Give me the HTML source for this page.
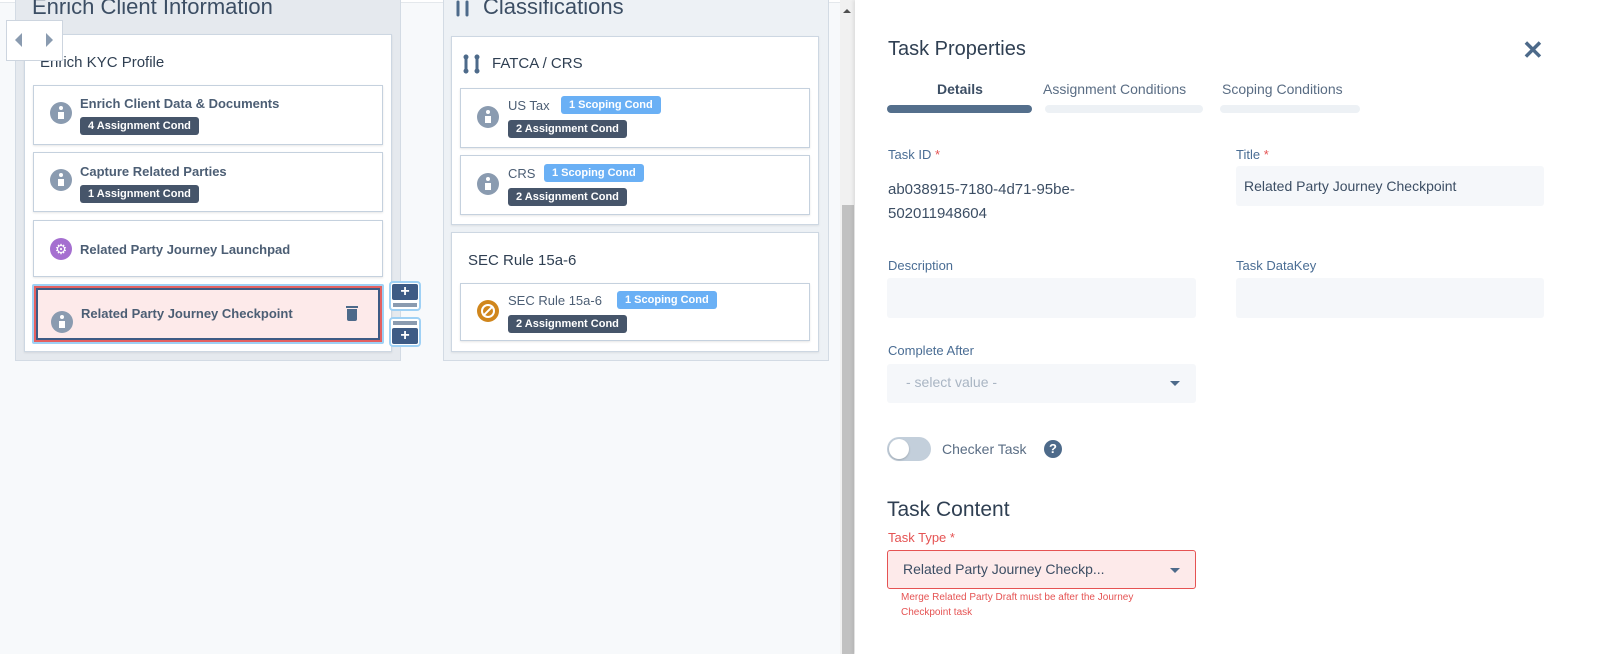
<!DOCTYPE html>
<html><head><meta charset="utf-8"><style>
*{box-sizing:border-box;margin:0;padding:0}
body{width:1612px;height:654px;overflow:hidden;background:#f7f9fb;font-family:"Liberation Sans",sans-serif;position:relative;color:#3c4e64}
.a{position:absolute}
.col{position:absolute;border:1px solid #d3dbe4;border-top:none}
.card{position:absolute;background:#fff;border:1px solid #cdd7e2;box-shadow:0 1px 2px rgba(0,0,0,.08)}
.t{position:absolute;background:#fff;border:1px solid #c5d1de;box-shadow:0 1px 2px rgba(0,0,0,.1)}
.ic{position:absolute;width:22px;height:22px;border-radius:50%;background:#8a9bb0}
.ic i{position:absolute;left:9px;top:4px;width:4px;height:4px;border-radius:50%;background:#fff}
.ic b{position:absolute;left:8px;top:10px;width:6px;height:7px;background:#fff}
.tt{position:absolute;font-size:13px;font-weight:bold;color:#4c5e74}
.bd{position:absolute;height:18px;line-height:18px;border-radius:3px;font-size:11px;font-weight:bold;color:#fff;padding:0 8px;background:#46556a}
.bl{background:#6ab0f5}
.lbl{position:absolute;font-size:13px;color:#4a6d94}
.req{color:#e55353}
.inp{position:absolute;background:#f5f7fa;border-radius:3px}
.tri{position:absolute;width:0;height:0;border-left:5px solid transparent;border-right:5px solid transparent;border-top:5px solid #4d6a8a}
</style></head><body>
<div class="a" style="left:0;top:0;width:840px;height:3px;background:#fff;border-bottom:1px solid #e4e8ec"></div>
<!-- col1 -->
<div class="col" style="left:15px;top:0;width:386px;height:361px;background:#e5e9ee"></div>
<div class="a" style="left:32px;top:-6px;font-size:22px;color:#3c4e64">Enrich Client Information</div>
<div class="card" style="left:24px;top:34px;width:368px;height:318px;background:#fff"></div>
<div class="a" style="left:40px;top:54px;font-size:15px;color:#2f3f52">Enrich KYC Profile</div>
<div class="a" style="left:6px;top:20px;width:57px;height:41px;background:#fff;border:1px solid #cdd5df"></div>
<div class="a" style="left:15px;top:33px;width:0;height:0;border-top:7px solid transparent;border-bottom:7px solid transparent;border-right:7px solid #8a9bb0"></div>
<div class="a" style="left:46px;top:33px;width:0;height:0;border-top:7px solid transparent;border-bottom:7px solid transparent;border-left:7px solid #8a9bb0"></div>

<div class="t" style="left:33px;top:85px;width:350px;height:60px"></div>
<div class="ic" style="left:50px;top:102px"><i></i><b></b></div>
<div class="tt" style="left:80px;top:96px">Enrich Client Data &amp; Documents</div>
<div class="bd" style="left:80px;top:117px">4 Assignment Cond</div>

<div class="t" style="left:33px;top:152px;width:350px;height:60px"></div>
<div class="ic" style="left:50px;top:169px"><i></i><b></b></div>
<div class="tt" style="left:80px;top:164px">Capture Related Parties</div>
<div class="bd" style="left:80px;top:185px">1 Assignment Cond</div>

<div class="t" style="left:33px;top:220px;width:350px;height:57px"></div>
<div class="a" style="left:50px;top:238px;width:22px;height:22px;border-radius:50%;background:#a56fd0;color:#fff;font-size:14px;text-align:center;line-height:22px">⚙</div>
<div class="tt" style="left:80px;top:242px">Related Party Journey Launchpad</div>

<div class="a" style="left:32px;top:284px;width:352px;height:60px;border:2px solid #9fd1f5;border-radius:2px"></div>
<div class="a" style="left:34px;top:286px;width:348px;height:56px;background:#fdeaea;border:2px solid #e46060;outline:2px solid #3d5b85;outline-offset:-4px"></div>
<div class="ic" style="left:51px;top:311px"><i></i><b></b></div>
<div class="tt" style="left:81px;top:306px">Related Party Journey Checkpoint</div>
<div class="a" style="left:346px;top:306px;width:12px;height:2px;background:#4d6a8a"></div>
<div class="a" style="left:347px;top:309px;width:10px;height:12px;background:#4d6a8a;border-radius:0 0 2px 2px"></div>

<div class="a" style="left:389px;top:281px;width:32px;height:30px;border:2px solid #9fd1f5;border-radius:4px;background:#fff"><div style="position:absolute;left:1px;top:1px;width:26px;height:16px;background:#3d5b85;border-radius:2px;color:#fff;font-size:16px;line-height:15px;text-align:center;font-weight:bold">+</div><div style="position:absolute;left:2px;top:20px;width:24px;height:4px;background:#8a9bb0"></div></div>
<div class="a" style="left:389px;top:317px;width:32px;height:30px;border:2px solid #9fd1f5;border-radius:4px;background:#fff"><div style="position:absolute;left:2px;top:2px;width:24px;height:4px;background:#8a9bb0"></div><div style="position:absolute;left:1px;top:9px;width:26px;height:16px;background:#3d5b85;border-radius:2px;color:#fff;font-size:16px;line-height:15px;text-align:center;font-weight:bold">+</div></div>

<!-- col2 -->
<div class="col" style="left:443px;top:0;width:386px;height:361px;background:#edf1f5"></div>
<svg class="a" style="left:455px;top:0" width="16" height="18" viewBox="0 0 16 18"><g stroke="#4d6a8a" stroke-width="3" stroke-linecap="round"><line x1="3" y1="2" x2="3" y2="15"/><line x1="12" y1="2" x2="12" y2="15"/></g></svg>
<div class="a" style="left:483px;top:-6px;font-size:22px;color:#3c4e64">Classifications</div>
<div class="card" style="left:451px;top:36px;width:368px;height:189px"></div>
<svg class="a" style="left:463px;top:54px" width="18" height="20" viewBox="0 0 18 20"><g stroke="#4d6a8a" stroke-width="3" stroke-linecap="round"><line x1="3" y1="2" x2="3" y2="18"/><line x1="14" y1="2" x2="14" y2="18"/></g><g fill="#4d6a8a"><circle cx="3" cy="3" r="2.5"/><circle cx="3" cy="17" r="2.5"/><circle cx="14" cy="3" r="2.5"/><circle cx="14" cy="17" r="2.5"/></g></svg>
<div class="a" style="left:492px;top:55px;font-size:15px;color:#2f3f52">FATCA / CRS</div>
<div class="t" style="left:460px;top:88px;width:350px;height:60px"></div>
<div class="ic" style="left:477px;top:106px"><i></i><b></b></div>
<div class="a" style="left:508px;top:98px;font-size:13px;color:#4c5e74">US Tax</div>
<div class="bd bl" style="left:561px;top:96px">1 Scoping Cond</div>
<div class="bd" style="left:508px;top:120px">2 Assignment Cond</div>
<div class="t" style="left:460px;top:155px;width:350px;height:60px"></div>
<div class="ic" style="left:477px;top:173px"><i></i><b></b></div>
<div class="a" style="left:508px;top:166px;font-size:13px;color:#4c5e74">CRS</div>
<div class="bd bl" style="left:544px;top:164px">1 Scoping Cond</div>
<div class="bd" style="left:508px;top:188px">2 Assignment Cond</div>

<div class="card" style="left:451px;top:232px;width:368px;height:120px"></div>
<div class="a" style="left:468px;top:252px;font-size:15px;color:#2f3f52">SEC Rule 15a-6</div>
<div class="t" style="left:460px;top:283px;width:350px;height:58px"></div>
<div class="a" style="left:477px;top:300px;width:22px;height:22px;border-radius:50%;background:#d0861c"><div style="position:absolute;left:4px;top:4px;width:14px;height:14px;border:2px solid #fff;border-radius:50%"></div><div style="position:absolute;left:10px;top:4px;width:2px;height:14px;background:#fff;transform:rotate(45deg)"></div></div>
<div class="a" style="left:508px;top:293px;font-size:13px;color:#4c5e74">SEC Rule 15a-6</div>
<div class="bd bl" style="left:617px;top:291px">1 Scoping Cond</div>
<div class="bd" style="left:508px;top:315px">2 Assignment Cond</div>

<!-- scrollbar -->
<div class="a" style="left:840px;top:0;width:15px;height:654px;background:#f1f1f1"></div>
<div class="a" style="left:842px;top:205px;width:12px;height:449px;background:#c1c1c1"></div>
<div class="a" style="left:843px;top:9px;width:0;height:0;border-left:4px solid transparent;border-right:4px solid transparent;border-bottom:4px solid #505050"></div>

<!-- panel -->
<div class="a" style="left:855px;top:0;width:757px;height:654px;background:#fff;box-shadow:-2px 0 3px rgba(0,0,0,.08)"></div>
<div class="a" style="left:888px;top:38px;font-size:20px;color:#2f3f52">Task Properties</div>
<div class="a" style="left:1522px;top:36px;font-size:26px;color:#4d6a8a;font-weight:bold;line-height:28px">✕</div>
<div class="a" style="left:888px;top:81px;width:144px;text-align:center;font-size:14px;font-weight:bold;color:#3c4e64">Details</div>
<div class="a" style="left:1043px;top:81px;font-size:14px;color:#5a6d84">Assignment Conditions</div>
<div class="a" style="left:1222px;top:81px;font-size:14px;color:#5a6d84">Scoping Conditions</div>
<div class="a" style="left:887px;top:105px;width:145px;height:8px;border-radius:4px;background:#546f8c"></div>
<div class="a" style="left:1045px;top:105px;width:158px;height:8px;border-radius:4px;background:#edf1f5"></div>
<div class="a" style="left:1220px;top:105px;width:140px;height:8px;border-radius:4px;background:#edf1f5"></div>

<div class="lbl" style="left:888px;top:147px">Task ID <span class="req">*</span></div>
<div class="a" style="left:888px;top:178px;font-size:15px;line-height:24px;color:#3c4e64">ab038915-7180-4d71-95be-<br>502011948604</div>
<div class="lbl" style="left:1236px;top:147px">Title <span class="req">*</span></div>
<div class="inp" style="left:1236px;top:166px;width:308px;height:40px"></div>
<div class="a" style="left:1244px;top:178px;font-size:14px;color:#3c4e64">Related Party Journey Checkpoint</div>

<div class="lbl" style="left:888px;top:258px">Description</div>
<div class="inp" style="left:887px;top:278px;width:309px;height:40px"></div>
<div class="lbl" style="left:1236px;top:258px">Task DataKey</div>
<div class="inp" style="left:1236px;top:278px;width:308px;height:40px"></div>

<div class="lbl" style="left:888px;top:343px">Complete After</div>
<div class="inp" style="left:887px;top:364px;width:309px;height:39px"></div>
<div class="a" style="left:906px;top:374px;font-size:14px;color:#a9b5c3">- select value -</div>
<div class="tri" style="left:1170px;top:381px"></div>

<div class="a" style="left:887px;top:437px;width:44px;height:24px;border-radius:12px;background:#c3cfdb"></div>
<div class="a" style="left:889px;top:439px;width:20px;height:20px;border-radius:50%;background:#fff;box-shadow:0 1px 2px rgba(0,0,0,.2)"></div>
<div class="a" style="left:942px;top:441px;font-size:14px;color:#5a6d84">Checker Task</div>
<div class="a" style="left:1044px;top:440px;width:18px;height:18px;border-radius:50%;background:#4d6a8a;color:#fff;font-size:13px;font-weight:bold;text-align:center;line-height:18px">?</div>

<div class="a" style="left:887px;top:498px;font-size:21px;color:#2f3f52">Task Content</div>
<div class="lbl" style="left:888px;top:530px;color:#e55353">Task Type <span>*</span></div>
<div class="a" style="left:887px;top:550px;width:309px;height:39px;background:#fdeaea;border:1px solid #e55353;border-radius:3px"></div>
<div class="a" style="left:903px;top:561px;font-size:14px;color:#3c4e64">Related Party Journey Checkp...</div>
<div class="tri" style="left:1170px;top:568px"></div>
<div class="a" style="left:901px;top:590px;font-size:10px;line-height:15px;color:#e55353">Merge Related Party Draft must be after the Journey<br>Checkpoint task</div>
</body></html>
